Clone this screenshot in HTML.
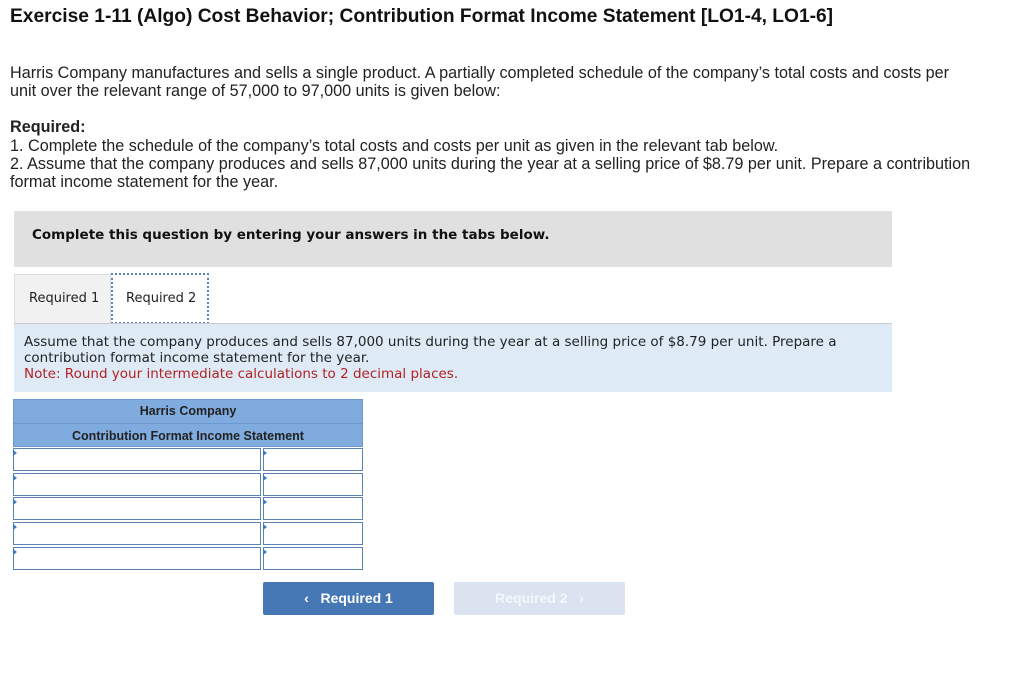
<!DOCTYPE html>
<html><head><style>
body{margin:0;width:1024px;height:679px;background:#fff;font-family:"Liberation Sans",sans-serif;color:#222;position:relative;overflow:hidden}
.a{position:absolute}
h1{position:absolute;left:10px;top:6px;margin:0;font-size:19.2px;font-weight:bold;color:#111;letter-spacing:0px}
p{margin:0}
.t{font-size:16.2px;line-height:18px;color:#222}
.v{font-family:"DejaVu Sans",sans-serif;font-size:13.5px}
.row{position:absolute;left:13px;width:350px;height:24px}
.c1,.c2{position:absolute;top:0;height:21px;border:1px solid #5a84b8;background:#fff}
.c1{left:0;width:246px}.c2{left:250px;width:98px}
.tri{position:absolute;top:2px;width:0;height:0;border-top:3px solid transparent;border-bottom:3px solid transparent;border-left:4px solid #3a78c4}
</style></head><body>
<h1>Exercise 1-11 (Algo) Cost Behavior; Contribution Format Income Statement [LO1-4, LO1-6]</h1>
<div class="a t" style="left:10px;top:64px;width:965px">Harris Company manufactures and sells a single product. A partially completed schedule of the company’s total costs and costs per unit over the relevant range of 57,000 to 97,000 units is given below:</div>
<div class="a t" style="left:10px;top:118px;font-weight:bold">Required:</div>
<div class="a t" style="left:10px;top:137px;width:990px">1. Complete the schedule of the company’s total costs and costs per unit as given in the relevant tab below.<br>2. Assume that the company produces and sells 87,000 units during the year at a selling price of $8.79 per unit. Prepare a contribution format income statement for the year.</div>
<div class="a" style="left:14px;top:211px;width:878px;height:56px;background:#e0e0e0"></div>
<div class="a v" style="left:32px;top:227px;font-weight:bold;font-size:13.5px;color:#111">Complete this question by entering your answers in the tabs below.</div>
<div class="a" style="left:14px;top:274px;width:97px;height:49px;background:#f1f1f1;border:1px solid #ddd;border-bottom:none;box-sizing:border-box"></div>
<div class="a v" style="left:29px;top:291px;color:#222;font-size:13px">Required 1</div>
<div class="a" style="left:111px;top:273px;width:98px;height:51px;border:2px dotted #5a84b8;box-sizing:border-box;background:#fff"></div>
<div class="a v" style="left:126px;top:291px;color:#222;font-size:13px">Required 2</div>
<div class="a" style="left:14px;top:323px;width:878px;height:1px;background:#ccc"></div>
<div class="a" style="left:14px;top:324px;width:878px;height:68px;background:#deebf7"></div>
<div class="a v" style="left:24px;top:334px;line-height:16px;color:#222">Assume that the company produces and sells 87,000 units during the year at a selling price of $8.79 per unit. Prepare a<br>contribution format income statement for the year.<br><span style="color:#b22222">Note: Round your intermediate calculations to 2 decimal places.</span></div>
<div class="a" style="left:13px;top:399px;width:350px;height:48px;background:#80abdf;border:1px solid #6b98cf;box-sizing:border-box"></div>
<div class="a" style="left:13px;top:423px;width:350px;height:1px;background:#6b98cf"></div>
<div class="a" style="left:13px;top:404px;width:350px;text-align:center;font-size:12.5px;font-weight:bold;color:#222">Harris Company</div>
<div class="a" style="left:13px;top:429px;width:350px;text-align:center;font-size:12.5px;font-weight:bold;color:#222">Contribution Format Income Statement</div>
<div class="row" style="top:448px"><div class="c1"></div><div class="c2"></div><div class="tri" style="left:0"></div><div class="tri" style="left:250px"></div></div>
<div class="row" style="top:473px"><div class="c1"></div><div class="c2"></div><div class="tri" style="left:0"></div><div class="tri" style="left:250px"></div></div>
<div class="row" style="top:497px"><div class="c1"></div><div class="c2"></div><div class="tri" style="left:0"></div><div class="tri" style="left:250px"></div></div>
<div class="row" style="top:522px"><div class="c1"></div><div class="c2"></div><div class="tri" style="left:0"></div><div class="tri" style="left:250px"></div></div>
<div class="row" style="top:547px"><div class="c1"></div><div class="c2"></div><div class="tri" style="left:0"></div><div class="tri" style="left:250px"></div></div>
<div class="a" style="left:263px;top:582px;width:171px;height:33px;background:#4677b5;border-radius:2px;color:#fff;font-weight:bold;font-size:14px;line-height:33px;text-align:center">&lsaquo;&nbsp;&nbsp;&nbsp;Required 1</div>
<div class="a" style="left:454px;top:582px;width:171px;height:33px;background:#dae3ef;border-radius:2px;color:#f4f7fb;font-weight:bold;font-size:14px;line-height:33px;text-align:center">Required 2&nbsp;&nbsp;&nbsp;&rsaquo;</div>
</body></html>
